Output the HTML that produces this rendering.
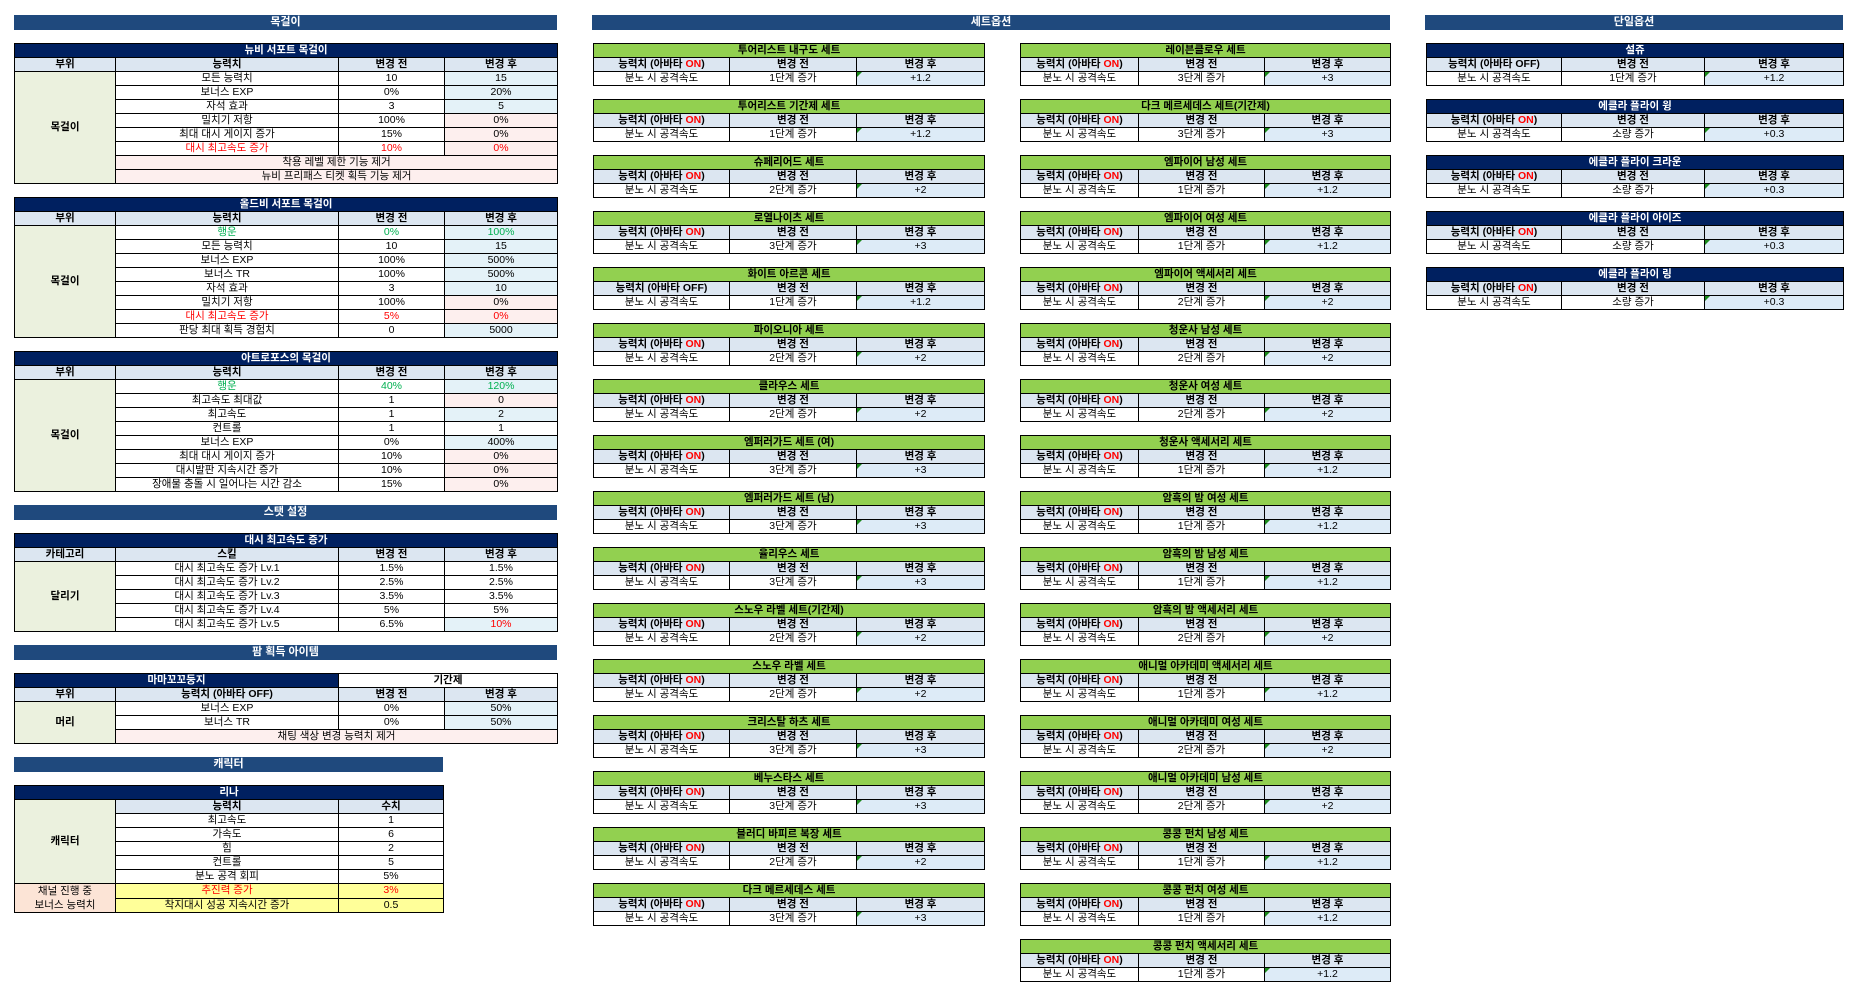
<!DOCTYPE html>
<html><head><meta charset="utf-8">
<style>
body{margin:0;width:1858px;height:997px;background:#fff;position:relative;overflow:hidden;font-family:"Liberation Sans","Noto Sans CJK KR",sans-serif;font-size:11px;color:#000}
.bar{position:absolute;height:15px;background:#1F497D;color:#fff;font-weight:bold;text-align:center;line-height:15px;font-size:11px}
table{position:absolute;border-collapse:collapse;table-layout:fixed;border:1px solid #000}
td{height:13px;padding:0;text-align:center;border:1px solid #000;line-height:13px;white-space:nowrap;overflow:hidden;font-size:10.5px;position:relative}
.t{background:#002060;color:#fff;font-weight:bold}
.g .t{background:#92D050;color:#000}
.h td{background:#DCE6F1;font-weight:bold}
.s .t{font-weight:bold}
.a{background:#DDEBF7}
.a:before{content:"";position:absolute;left:0;top:0;border-top:5px solid #1a8a1a;border-right:5px solid transparent}
.c{background:#EBF1DE;font-weight:bold}
.d td{border-bottom:1px dashed #000}
.b{background:#E4F2F8}
.p{background:#FDEFEE}
.r{color:#f00}
.gr{color:#00B050}
.y{background:#FFFF99}
.pe{background:#FCE4D6}
i{font-style:normal;color:#f00}
</style></head><body>

<div class="bar" style="left:14px;top:15px;width:543px">목걸이</div>
<div class="bar" style="left:592px;top:15px;width:798px">세트옵션</div>
<div class="bar" style="left:1425px;top:15px;width:418px">단일옵션</div>

<table style="left:14px;top:43px;width:543px">
<col style="width:101px"><col style="width:223px"><col style="width:106px"><col style="width:113px">
<tr><td colspan="4" class="t">뉴비 서포트 목걸이</td></tr>
<tr class="h"><td>부위</td><td>능력치</td><td>변경 전</td><td>변경 후</td></tr>
<tr class="d"><td rowspan="8" class="c" style="border-bottom:1px solid #000">목걸이</td><td>모든 능력치</td><td>10</td><td class="b">15</td></tr>
<tr class="d"><td>보너스 EXP</td><td>0%</td><td class="b">20%</td></tr>
<tr class="d"><td>자석 효과</td><td>3</td><td class="b">5</td></tr>
<tr class="d"><td>밀치기 저항</td><td>100%</td><td class="p">0%</td></tr>
<tr class="d"><td>최대 대시 게이지 증가</td><td>15%</td><td class="p">0%</td></tr>
<tr><td class="r">대시 최고속도 증가</td><td class="r">10%</td><td class="p r">0%</td></tr>
<tr><td colspan="3" class="p">착용 레벨 제한 기능 제거</td></tr>
<tr><td colspan="3" class="p">뉴비 프리패스 티켓 획득 기능 제거</td></tr>
</table>

<table style="left:14px;top:197px;width:543px">
<col style="width:101px"><col style="width:223px"><col style="width:106px"><col style="width:113px">
<tr><td colspan="4" class="t">올드비 서포트 목걸이</td></tr>
<tr class="h"><td>부위</td><td>능력치</td><td>변경 전</td><td>변경 후</td></tr>
<tr class="d"><td rowspan="8" class="c" style="border-bottom:1px solid #000">목걸이</td><td class="gr">행운</td><td class="gr">0%</td><td class="b gr">100%</td></tr>
<tr class="d"><td>모든 능력치</td><td>10</td><td class="b">15</td></tr>
<tr class="d"><td>보너스 EXP</td><td>100%</td><td class="b">500%</td></tr>
<tr class="d"><td>보너스 TR</td><td>100%</td><td class="b">500%</td></tr>
<tr class="d"><td>자석 효과</td><td>3</td><td class="b">10</td></tr>
<tr class="d"><td>밀치기 저항</td><td>100%</td><td class="p">0%</td></tr>
<tr class="d"><td class="r">대시 최고속도 증가</td><td class="r">5%</td><td class="p r">0%</td></tr>
<tr><td>판당 최대 획득 경험치</td><td>0</td><td class="b">5000</td></tr>
</table>

<table style="left:14px;top:351px;width:543px">
<col style="width:101px"><col style="width:223px"><col style="width:106px"><col style="width:113px">
<tr><td colspan="4" class="t">아트로포스의 목걸이</td></tr>
<tr class="h"><td>부위</td><td>능력치</td><td>변경 전</td><td>변경 후</td></tr>
<tr class="d"><td rowspan="8" class="c" style="border-bottom:1px solid #000">목걸이</td><td class="gr">행운</td><td class="gr">40%</td><td class="b gr">120%</td></tr>
<tr class="d"><td>최고속도 최대값</td><td>1</td><td class="p">0</td></tr>
<tr class="d"><td>최고속도</td><td>1</td><td class="b">2</td></tr>
<tr class="d"><td>컨트롤</td><td>1</td><td>1</td></tr>
<tr class="d"><td>보너스 EXP</td><td>0%</td><td class="b">400%</td></tr>
<tr class="d"><td>최대 대시 게이지 증가</td><td>10%</td><td class="p">0%</td></tr>
<tr class="d"><td>대시발판 지속시간 증가</td><td>10%</td><td class="p">0%</td></tr>
<tr><td>장애물 충돌 시 일어나는 시간 감소</td><td>15%</td><td class="p">0%</td></tr>
</table>

<div class="bar" style="left:14px;top:505px;width:543px">스탯 설정</div>

<table style="left:14px;top:533px;width:543px">
<col style="width:101px"><col style="width:223px"><col style="width:106px"><col style="width:113px">
<tr><td colspan="4" class="t">대시 최고속도 증가</td></tr>
<tr class="h"><td>카테고리</td><td>스킬</td><td>변경 전</td><td>변경 후</td></tr>
<tr class="d"><td rowspan="5" class="c" style="border-bottom:1px solid #000">달리기</td><td>대시 최고속도 증가 Lv.1</td><td>1.5%</td><td>1.5%</td></tr>
<tr class="d"><td>대시 최고속도 증가 Lv.2</td><td>2.5%</td><td>2.5%</td></tr>
<tr class="d"><td>대시 최고속도 증가 Lv.3</td><td>3.5%</td><td>3.5%</td></tr>
<tr class="d"><td>대시 최고속도 증가 Lv.4</td><td>5%</td><td>5%</td></tr>
<tr><td>대시 최고속도 증가 Lv.5</td><td>6.5%</td><td class="b r">10%</td></tr>
</table>

<div class="bar" style="left:14px;top:645px;width:543px">팜 획득 아이템</div>

<table style="left:14px;top:673px;width:543px">
<col style="width:101px"><col style="width:223px"><col style="width:106px"><col style="width:113px">
<tr><td colspan="2" class="t">마마꼬꼬둥지</td><td colspan="2" style="font-weight:bold">기간제</td></tr>
<tr class="h"><td>부위</td><td>능력치 (아바타 OFF)</td><td>변경 전</td><td>변경 후</td></tr>
<tr class="d"><td rowspan="3" class="c" style="border-bottom:1px solid #000">머리</td><td>보너스 EXP</td><td>0%</td><td class="b">50%</td></tr>
<tr class="d"><td>보너스 TR</td><td>0%</td><td class="b">50%</td></tr>
<tr><td colspan="3" class="p">채팅 색상 변경 능력치 제거</td></tr>
</table>

<div class="bar" style="left:14px;top:757px;width:429px">캐릭터</div>

<table style="left:14px;top:785px;width:429px">
<col style="width:101px"><col style="width:223px"><col style="width:105px">
<tr><td colspan="3" class="t">리나</td></tr>
<tr class="h"><td rowspan="6" class="c" style="background:#EBF1DE;border-bottom:1px solid #000">캐릭터</td><td>능력치</td><td>수치</td></tr>
<tr class="d"><td>최고속도</td><td>1</td></tr>
<tr class="d"><td>가속도</td><td>6</td></tr>
<tr class="d"><td>힘</td><td>2</td></tr>
<tr class="d"><td>컨트롤</td><td>5</td></tr>
<tr><td>분노 공격 회피</td><td>5%</td></tr>
<tr class="d"><td rowspan="2" class="pe" style="line-height:14px;border-bottom:1px solid #000">채널 진행 중<br>보너스 능력치</td><td class="y r">추진력 증가</td><td class="y r">3%</td></tr>
<tr><td class="y">착지대시 성공 지속시간 증가</td><td class="y">0.5</td></tr>
</table>

<table class="s g" style="left:593px;top:43px;width:391px"><col style="width:136px"><col style="width:127px"><col style="width:128px"><tr><td colspan="3" class="t">투어리스트 내구도 세트</td></tr><tr class="h"><td>능력치 (아바타 <i>ON</i>)</td><td>변경 전</td><td>변경 후</td></tr><tr><td>분노 시 공격속도</td><td>1단계 증가</td><td class="a">+1.2</td></tr></table>
<table class="s g" style="left:593px;top:99px;width:391px"><col style="width:136px"><col style="width:127px"><col style="width:128px"><tr><td colspan="3" class="t">투어리스트 기간제 세트</td></tr><tr class="h"><td>능력치 (아바타 <i>ON</i>)</td><td>변경 전</td><td>변경 후</td></tr><tr><td>분노 시 공격속도</td><td>1단계 증가</td><td class="a">+1.2</td></tr></table>
<table class="s g" style="left:593px;top:155px;width:391px"><col style="width:136px"><col style="width:127px"><col style="width:128px"><tr><td colspan="3" class="t">슈페리어드 세트</td></tr><tr class="h"><td>능력치 (아바타 <i>ON</i>)</td><td>변경 전</td><td>변경 후</td></tr><tr><td>분노 시 공격속도</td><td>2단계 증가</td><td class="a">+2</td></tr></table>
<table class="s g" style="left:593px;top:211px;width:391px"><col style="width:136px"><col style="width:127px"><col style="width:128px"><tr><td colspan="3" class="t">로열나이츠 세트</td></tr><tr class="h"><td>능력치 (아바타 <i>ON</i>)</td><td>변경 전</td><td>변경 후</td></tr><tr><td>분노 시 공격속도</td><td>3단계 증가</td><td class="a">+3</td></tr></table>
<table class="s g" style="left:593px;top:267px;width:391px"><col style="width:136px"><col style="width:127px"><col style="width:128px"><tr><td colspan="3" class="t">화이트 아르콘 세트</td></tr><tr class="h"><td>능력치 (아바타 OFF)</td><td>변경 전</td><td>변경 후</td></tr><tr><td>분노 시 공격속도</td><td>1단계 증가</td><td class="a">+1.2</td></tr></table>
<table class="s g" style="left:593px;top:323px;width:391px"><col style="width:136px"><col style="width:127px"><col style="width:128px"><tr><td colspan="3" class="t">파이오니아 세트</td></tr><tr class="h"><td>능력치 (아바타 <i>ON</i>)</td><td>변경 전</td><td>변경 후</td></tr><tr><td>분노 시 공격속도</td><td>2단계 증가</td><td class="a">+2</td></tr></table>
<table class="s g" style="left:593px;top:379px;width:391px"><col style="width:136px"><col style="width:127px"><col style="width:128px"><tr><td colspan="3" class="t">클라우스 세트</td></tr><tr class="h"><td>능력치 (아바타 <i>ON</i>)</td><td>변경 전</td><td>변경 후</td></tr><tr><td>분노 시 공격속도</td><td>2단계 증가</td><td class="a">+2</td></tr></table>
<table class="s g" style="left:593px;top:435px;width:391px"><col style="width:136px"><col style="width:127px"><col style="width:128px"><tr><td colspan="3" class="t">엠퍼러가드 세트 (여)</td></tr><tr class="h"><td>능력치 (아바타 <i>ON</i>)</td><td>변경 전</td><td>변경 후</td></tr><tr><td>분노 시 공격속도</td><td>3단계 증가</td><td class="a">+3</td></tr></table>
<table class="s g" style="left:593px;top:491px;width:391px"><col style="width:136px"><col style="width:127px"><col style="width:128px"><tr><td colspan="3" class="t">엠퍼러가드 세트 (남)</td></tr><tr class="h"><td>능력치 (아바타 <i>ON</i>)</td><td>변경 전</td><td>변경 후</td></tr><tr><td>분노 시 공격속도</td><td>3단계 증가</td><td class="a">+3</td></tr></table>
<table class="s g" style="left:593px;top:547px;width:391px"><col style="width:136px"><col style="width:127px"><col style="width:128px"><tr><td colspan="3" class="t">율리우스 세트</td></tr><tr class="h"><td>능력치 (아바타 <i>ON</i>)</td><td>변경 전</td><td>변경 후</td></tr><tr><td>분노 시 공격속도</td><td>3단계 증가</td><td class="a">+3</td></tr></table>
<table class="s g" style="left:593px;top:603px;width:391px"><col style="width:136px"><col style="width:127px"><col style="width:128px"><tr><td colspan="3" class="t">스노우 라벨 세트(기간제)</td></tr><tr class="h"><td>능력치 (아바타 <i>ON</i>)</td><td>변경 전</td><td>변경 후</td></tr><tr><td>분노 시 공격속도</td><td>2단계 증가</td><td class="a">+2</td></tr></table>
<table class="s g" style="left:593px;top:659px;width:391px"><col style="width:136px"><col style="width:127px"><col style="width:128px"><tr><td colspan="3" class="t">스노우 라벨 세트</td></tr><tr class="h"><td>능력치 (아바타 <i>ON</i>)</td><td>변경 전</td><td>변경 후</td></tr><tr><td>분노 시 공격속도</td><td>2단계 증가</td><td class="a">+2</td></tr></table>
<table class="s g" style="left:593px;top:715px;width:391px"><col style="width:136px"><col style="width:127px"><col style="width:128px"><tr><td colspan="3" class="t">크리스탈 하츠 세트</td></tr><tr class="h"><td>능력치 (아바타 <i>ON</i>)</td><td>변경 전</td><td>변경 후</td></tr><tr><td>분노 시 공격속도</td><td>3단계 증가</td><td class="a">+3</td></tr></table>
<table class="s g" style="left:593px;top:771px;width:391px"><col style="width:136px"><col style="width:127px"><col style="width:128px"><tr><td colspan="3" class="t">베누스타스 세트</td></tr><tr class="h"><td>능력치 (아바타 <i>ON</i>)</td><td>변경 전</td><td>변경 후</td></tr><tr><td>분노 시 공격속도</td><td>3단계 증가</td><td class="a">+3</td></tr></table>
<table class="s g" style="left:593px;top:827px;width:391px"><col style="width:136px"><col style="width:127px"><col style="width:128px"><tr><td colspan="3" class="t">블러디 바피르 복장 세트</td></tr><tr class="h"><td>능력치 (아바타 <i>ON</i>)</td><td>변경 전</td><td>변경 후</td></tr><tr><td>분노 시 공격속도</td><td>2단계 증가</td><td class="a">+2</td></tr></table>
<table class="s g" style="left:593px;top:883px;width:391px"><col style="width:136px"><col style="width:127px"><col style="width:128px"><tr><td colspan="3" class="t">다크 메르세데스 세트</td></tr><tr class="h"><td>능력치 (아바타 <i>ON</i>)</td><td>변경 전</td><td>변경 후</td></tr><tr><td>분노 시 공격속도</td><td>3단계 증가</td><td class="a">+3</td></tr></table>

<table class="s g" style="left:1020px;top:43px;width:370px"><col style="width:118px"><col style="width:126px"><col style="width:126px"><tr><td colspan="3" class="t">레이븐클로우 세트</td></tr><tr class="h"><td>능력치 (아바타 <i>ON</i>)</td><td>변경 전</td><td>변경 후</td></tr><tr><td>분노 시 공격속도</td><td>3단계 증가</td><td class="a">+3</td></tr></table>
<table class="s g" style="left:1020px;top:99px;width:370px"><col style="width:118px"><col style="width:126px"><col style="width:126px"><tr><td colspan="3" class="t">다크 메르세데스 세트(기간제)</td></tr><tr class="h"><td>능력치 (아바타 <i>ON</i>)</td><td>변경 전</td><td>변경 후</td></tr><tr><td>분노 시 공격속도</td><td>3단계 증가</td><td class="a">+3</td></tr></table>
<table class="s g" style="left:1020px;top:155px;width:370px"><col style="width:118px"><col style="width:126px"><col style="width:126px"><tr><td colspan="3" class="t">엠파이어 남성 세트</td></tr><tr class="h"><td>능력치 (아바타 <i>ON</i>)</td><td>변경 전</td><td>변경 후</td></tr><tr><td>분노 시 공격속도</td><td>1단계 증가</td><td class="a">+1.2</td></tr></table>
<table class="s g" style="left:1020px;top:211px;width:370px"><col style="width:118px"><col style="width:126px"><col style="width:126px"><tr><td colspan="3" class="t">엠파이어 여성 세트</td></tr><tr class="h"><td>능력치 (아바타 <i>ON</i>)</td><td>변경 전</td><td>변경 후</td></tr><tr><td>분노 시 공격속도</td><td>1단계 증가</td><td class="a">+1.2</td></tr></table>
<table class="s g" style="left:1020px;top:267px;width:370px"><col style="width:118px"><col style="width:126px"><col style="width:126px"><tr><td colspan="3" class="t">엠파이어 액세서리 세트</td></tr><tr class="h"><td>능력치 (아바타 <i>ON</i>)</td><td>변경 전</td><td>변경 후</td></tr><tr><td>분노 시 공격속도</td><td>2단계 증가</td><td class="a">+2</td></tr></table>
<table class="s g" style="left:1020px;top:323px;width:370px"><col style="width:118px"><col style="width:126px"><col style="width:126px"><tr><td colspan="3" class="t">청운사 남성 세트</td></tr><tr class="h"><td>능력치 (아바타 <i>ON</i>)</td><td>변경 전</td><td>변경 후</td></tr><tr><td>분노 시 공격속도</td><td>2단계 증가</td><td class="a">+2</td></tr></table>
<table class="s g" style="left:1020px;top:379px;width:370px"><col style="width:118px"><col style="width:126px"><col style="width:126px"><tr><td colspan="3" class="t">청운사 여성 세트</td></tr><tr class="h"><td>능력치 (아바타 <i>ON</i>)</td><td>변경 전</td><td>변경 후</td></tr><tr><td>분노 시 공격속도</td><td>2단계 증가</td><td class="a">+2</td></tr></table>
<table class="s g" style="left:1020px;top:435px;width:370px"><col style="width:118px"><col style="width:126px"><col style="width:126px"><tr><td colspan="3" class="t">청운사 액세서리 세트</td></tr><tr class="h"><td>능력치 (아바타 <i>ON</i>)</td><td>변경 전</td><td>변경 후</td></tr><tr><td>분노 시 공격속도</td><td>1단계 증가</td><td class="a">+1.2</td></tr></table>
<table class="s g" style="left:1020px;top:491px;width:370px"><col style="width:118px"><col style="width:126px"><col style="width:126px"><tr><td colspan="3" class="t">암흑의 밤 여성 세트</td></tr><tr class="h"><td>능력치 (아바타 <i>ON</i>)</td><td>변경 전</td><td>변경 후</td></tr><tr><td>분노 시 공격속도</td><td>1단계 증가</td><td class="a">+1.2</td></tr></table>
<table class="s g" style="left:1020px;top:547px;width:370px"><col style="width:118px"><col style="width:126px"><col style="width:126px"><tr><td colspan="3" class="t">암흑의 밤 남성 세트</td></tr><tr class="h"><td>능력치 (아바타 <i>ON</i>)</td><td>변경 전</td><td>변경 후</td></tr><tr><td>분노 시 공격속도</td><td>1단계 증가</td><td class="a">+1.2</td></tr></table>
<table class="s g" style="left:1020px;top:603px;width:370px"><col style="width:118px"><col style="width:126px"><col style="width:126px"><tr><td colspan="3" class="t">암흑의 밤 액세서리 세트</td></tr><tr class="h"><td>능력치 (아바타 <i>ON</i>)</td><td>변경 전</td><td>변경 후</td></tr><tr><td>분노 시 공격속도</td><td>2단계 증가</td><td class="a">+2</td></tr></table>
<table class="s g" style="left:1020px;top:659px;width:370px"><col style="width:118px"><col style="width:126px"><col style="width:126px"><tr><td colspan="3" class="t">애니멀 아카데미 액세서리 세트</td></tr><tr class="h"><td>능력치 (아바타 <i>ON</i>)</td><td>변경 전</td><td>변경 후</td></tr><tr><td>분노 시 공격속도</td><td>1단계 증가</td><td class="a">+1.2</td></tr></table>
<table class="s g" style="left:1020px;top:715px;width:370px"><col style="width:118px"><col style="width:126px"><col style="width:126px"><tr><td colspan="3" class="t">애니멀 아카데미 여성 세트</td></tr><tr class="h"><td>능력치 (아바타 <i>ON</i>)</td><td>변경 전</td><td>변경 후</td></tr><tr><td>분노 시 공격속도</td><td>2단계 증가</td><td class="a">+2</td></tr></table>
<table class="s g" style="left:1020px;top:771px;width:370px"><col style="width:118px"><col style="width:126px"><col style="width:126px"><tr><td colspan="3" class="t">애니멀 아카데미 남성 세트</td></tr><tr class="h"><td>능력치 (아바타 <i>ON</i>)</td><td>변경 전</td><td>변경 후</td></tr><tr><td>분노 시 공격속도</td><td>2단계 증가</td><td class="a">+2</td></tr></table>
<table class="s g" style="left:1020px;top:827px;width:370px"><col style="width:118px"><col style="width:126px"><col style="width:126px"><tr><td colspan="3" class="t">콩콩 펀치 남성 세트</td></tr><tr class="h"><td>능력치 (아바타 <i>ON</i>)</td><td>변경 전</td><td>변경 후</td></tr><tr><td>분노 시 공격속도</td><td>1단계 증가</td><td class="a">+1.2</td></tr></table>
<table class="s g" style="left:1020px;top:883px;width:370px"><col style="width:118px"><col style="width:126px"><col style="width:126px"><tr><td colspan="3" class="t">콩콩 펀치 여성 세트</td></tr><tr class="h"><td>능력치 (아바타 <i>ON</i>)</td><td>변경 전</td><td>변경 후</td></tr><tr><td>분노 시 공격속도</td><td>1단계 증가</td><td class="a">+1.2</td></tr></table>
<table class="s g" style="left:1020px;top:939px;width:370px"><col style="width:118px"><col style="width:126px"><col style="width:126px"><tr><td colspan="3" class="t">콩콩 펀치 액세서리 세트</td></tr><tr class="h"><td>능력치 (아바타 <i>ON</i>)</td><td>변경 전</td><td>변경 후</td></tr><tr><td>분노 시 공격속도</td><td>1단계 증가</td><td class="a">+1.2</td></tr></table>

<table class="s" style="left:1426px;top:43px;width:417px"><col style="width:135px"><col style="width:143px"><col style="width:139px"><tr><td colspan="3" class="t">설쥬</td></tr><tr class="h"><td>능력치 (아바타 OFF)</td><td>변경 전</td><td>변경 후</td></tr><tr><td>분노 시 공격속도</td><td>1단계 증가</td><td class="a">+1.2</td></tr></table>
<table class="s" style="left:1426px;top:99px;width:417px"><col style="width:135px"><col style="width:143px"><col style="width:139px"><tr><td colspan="3" class="t">에클라 플라이 윙</td></tr><tr class="h"><td>능력치 (아바타 <i>ON</i>)</td><td>변경 전</td><td>변경 후</td></tr><tr><td>분노 시 공격속도</td><td>소량 증가</td><td class="a">+0.3</td></tr></table>
<table class="s" style="left:1426px;top:155px;width:417px"><col style="width:135px"><col style="width:143px"><col style="width:139px"><tr><td colspan="3" class="t">에클라 플라이 크라운</td></tr><tr class="h"><td>능력치 (아바타 <i>ON</i>)</td><td>변경 전</td><td>변경 후</td></tr><tr><td>분노 시 공격속도</td><td>소량 증가</td><td class="a">+0.3</td></tr></table>
<table class="s" style="left:1426px;top:211px;width:417px"><col style="width:135px"><col style="width:143px"><col style="width:139px"><tr><td colspan="3" class="t">에클라 플라이 아이즈</td></tr><tr class="h"><td>능력치 (아바타 <i>ON</i>)</td><td>변경 전</td><td>변경 후</td></tr><tr><td>분노 시 공격속도</td><td>소량 증가</td><td class="a">+0.3</td></tr></table>
<table class="s" style="left:1426px;top:267px;width:417px"><col style="width:135px"><col style="width:143px"><col style="width:139px"><tr><td colspan="3" class="t">에클라 플라이 링</td></tr><tr class="h"><td>능력치 (아바타 <i>ON</i>)</td><td>변경 전</td><td>변경 후</td></tr><tr><td>분노 시 공격속도</td><td>소량 증가</td><td class="a">+0.3</td></tr></table>

</body></html>
